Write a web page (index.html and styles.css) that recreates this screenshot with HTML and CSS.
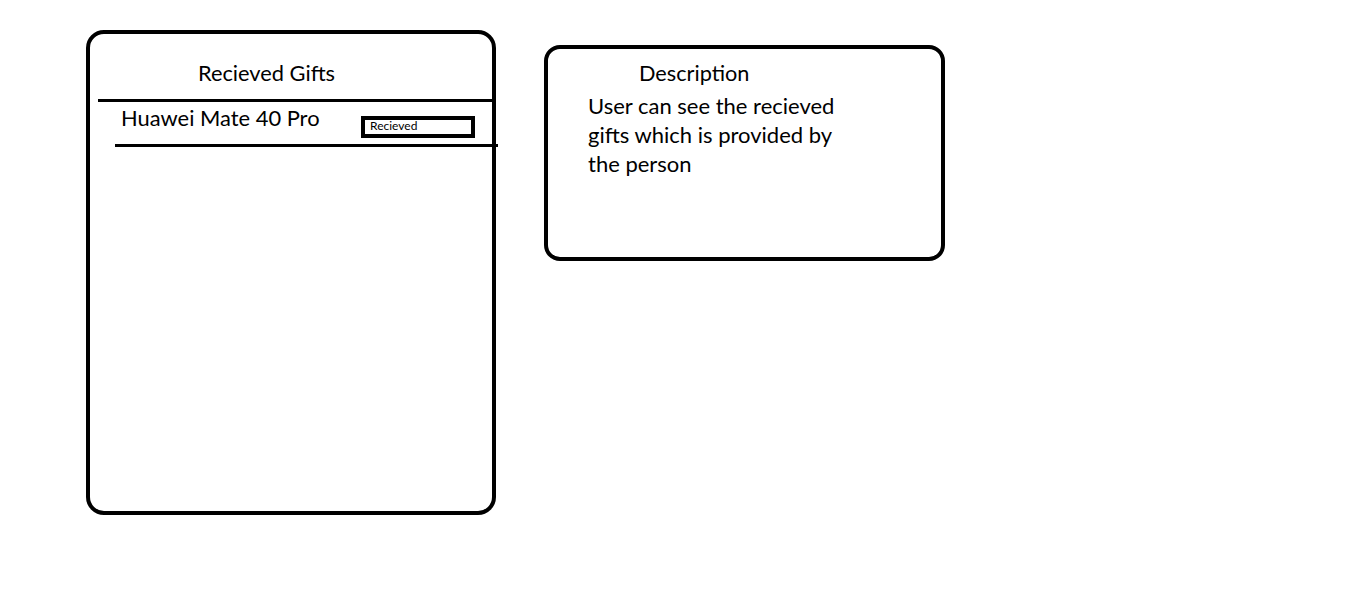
FILE: index.html
```html
<!DOCTYPE html>
<html lang="en">
<head>
    <meta charset="UTF-8">
    <meta name="viewport" content="width=device-width, initial-scale=1.0">
    <title>Recieved Gifts</title>
    <link rel="stylesheet" href="styles.css">
</head>
<body>
    <div class="board">
        <!-- Gift list screen -->
        <section class="card gifts">
            <h2 class="gifts-title">Recieved Gifts</h2>
            <hr class="rule rule-top">
            <div class="gift-row">
                <span class="gift-name">Huawei Mate 40 Pro</span>
                <span class="gift-status">Recieved</span>
            </div>
            <hr class="rule rule-bottom">
        </section>

        <!-- Description note -->
        <section class="card note">
            <h2 class="note-title">Description</h2>
            <p class="note-text">User can see the recieved gifts which is provided by the person</p>
        </section>
    </div>
</body>
</html>
```

FILE: styles.css
```css
/* Reset some default styles */
* {
    margin: 0;
    padding: 0;
    box-sizing: border-box;
}

body {
    font-family: Lato, "Open Sans", sans-serif;
    background-color: #fff;
    color: #000;
}

.board {
    display: flex;
    align-items: flex-start;
    gap: 48px;
    padding: 30px 0 0 86px;
}

.card {
    border: 4px solid #000;
    background-color: #fff;
}

/* Left card */
.gifts {
    width: 410px;
    height: 485px;
    border-radius: 18px;
}

.gifts-title {
    font-size: 21.8px;
    font-weight: normal;
    line-height: 26px;
    margin: 26px 0 0 108px;
}

.rule {
    border: none;
    height: 3px;
    background-color: #000;
}

.rule-top {
    margin: 13px -2px 0 8px;
}

.gift-row {
    display: flex;
    align-items: flex-start;
    height: 42px;
    padding: 3px 0 0 31px;
}

.gift-name {
    font-size: 21.9px;
    line-height: 26px;
    width: 240px;
}

.gift-status {
    width: 114px;
    height: 22px;
    margin-top: 11px;
    border: 4px solid #000;
    font-size: 12px;
    line-height: 11px;
    padding-left: 5px;
}

.rule-bottom {
    margin: 0 -6px 0 25px;
}

/* Right card */
.note {
    width: 401px;
    height: 216px;
    margin-top: 15px;
    border-radius: 16px;
}

.note-title {
    font-size: 21.7px;
    font-weight: normal;
    line-height: 26px;
    margin: 11px 0 0 91px;
}

.note-text {
    font-size: 22px;
    line-height: 29px;
    width: 262px;
    margin: 5px 0 0 40px;
}
```
